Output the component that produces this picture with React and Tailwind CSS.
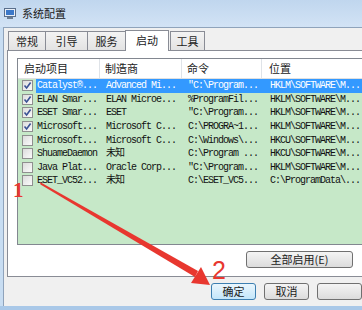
import React from 'react';

const rows = [
    { on: true, name: 'Catalyst®...', maker: 'Advanced Mi...', cmd: '"C:\\Program...', loc: 'HKLM\\SOFTWARE\\M...' },
    { on: true, name: 'ELAN Smar...', maker: 'ELAN Microe...', cmd: '%ProgramFil...', loc: 'HKLM\\SOFTWARE\\M...' },
    { on: true, name: 'ESET Smar...', maker: 'ESET', cmd: '"C:\\Program...', loc: 'HKLM\\SOFTWARE\\M...' },
    { on: true, name: 'Microsoft...', maker: 'Microsoft C...', cmd: 'C:\\PROGRA~1...', loc: 'HKLM\\SOFTWARE\\M...' },
    { on: false, name: 'Microsoft...', maker: 'Microsoft C...', cmd: 'C:\\Windows\\...', loc: 'HKCU\\SOFTWARE\\M...' },
    { on: false, name: 'ShuameDaemon', maker: '未知', cmd: 'C:\\Program ...', loc: 'HKCU\\SOFTWARE\\M...' },
    { on: false, name: 'Java Plat...', maker: 'Oracle Corp...', cmd: '"C:\\Program...', loc: 'HKLM\\SOFTWARE\\M...' },
    { on: false, name: 'ESET_VC52...', maker: '未知', cmd: 'C:\\ESET_VC5...', loc: 'C:\\ProgramData\\...' },
];

const tabs = ['常规', '引导', '服务', '启动', '工具'];

const cjk = "font-['Noto_Sans_CJK_SC',sans-serif]";
const mono = "font-['Liberation_Mono','Noto_Sans_CJK_SC',monospace] text-[10px] tracking-[-1px]";

const Check = ({ on }) => (
    <div className="w-[11px] h-[11px] border border-[#8f8f8f] bg-gradient-to-br from-[#dcdcdc] to-[#fbfbfb] flex items-center justify-center shrink-0">
        {on && (
            <svg width="9" height="9" viewBox="0 0 9 9">
                <path d="M1.5 4.5 L3.6 7 L7.6 1.5" fill="none" stroke="#3a5294" strokeWidth="1.6" />
            </svg>
        )}
    </div>
);

const Button = ({ children, focus, className }) => (
    <div
        className={`h-[17px] rounded-[3px] border flex items-center justify-center text-[11px] text-[#1b1b1b] ${cjk} ${
            focus ? 'border-[#3c7fb1] bg-gradient-to-b from-[#eaf6fd] to-[#c3e6fa]' : 'border-[#707070] bg-gradient-to-b from-[#f4f4f4] to-[#dcdcdc]'
        } ${className}`}
    >
        {children}
    </div>
);

export default function App() {
    return (
        <div className="relative w-[362px] h-[310px] overflow-hidden bg-[#c8ddf2] flex flex-col">
            {/* title bar */}
            <div className="h-[27px] shrink-0 flex items-center pl-[4px] gap-[6px] bg-gradient-to-b from-[#c0d6ee] to-[#d2e3f5]">
                <svg width="12" height="11" viewBox="0 0 12 11">
                    <rect x="0.5" y="0.5" width="11" height="8" fill="#e8eef6" stroke="#5a6f8c" />
                    <rect x="2" y="2" width="8" height="5" fill="#3c78c8" />
                    <rect x="3" y="9" width="6" height="2" fill="#6c7d92" />
                </svg>
                <span className={`text-[11px] text-[#1a1a1a] ${cjk}`}>系统配置</span>
            </div>

            {/* window body */}
            <div className="flex-1 ml-[3px] border-l border-t border-[#8fa3bb] bg-[#f0f0f0] flex flex-col">
                <div className="h-[22px] shrink-0 flex items-end pl-[4px]">
                    {tabs.map((t, i) => (
                        <div
                            key={t}
                            className={`border border-b-0 border-[#898c95] flex items-center justify-center text-[11px] text-[#1b1b1b] ${cjk} ${
                                i === 3
                                    ? 'h-[21px] w-[44px] bg-white -mb-px relative z-10 pb-[2px]'
                                    : 'h-[19px] bg-gradient-to-b from-[#f3f3f3] to-[#e3e3e3] -mr-px'
                            } ${i === 0 ? 'w-[38px]' : ''} ${i === 1 ? 'w-[43px]' : ''} ${i === 2 ? 'w-[39px]' : ''} ${i === 4 ? 'w-[35px] ml-[1px]' : ''}`}
                        >
                            {t}
                        </div>
                    ))}
                </div>

                {/* tab panel */}
                <div className="h-[227px] shrink-0 w-[420px] ml-[3px] border border-[#898c95] bg-white flex flex-col">
                    <div className="ml-[9px] mt-[7px] h-[187px] w-[400px] border border-[#828790] bg-[#c6e8c8] flex flex-col">
                        <div className={`h-[20px] shrink-0 bg-white border-b border-[#e0e0e0] flex text-[11px] text-[#1b1b1b] ${cjk}`}>
                            <div className="w-[82px] pl-[6px] border-r border-[#dfe3e8] flex items-center">启动项目</div>
                            <div className="w-[82px] pl-[5px] border-r border-[#dfe3e8] flex items-center">制造商</div>
                            <div className="w-[80px] pl-[5px] border-r border-[#dfe3e8] flex items-center">命令</div>
                            <div className="flex-1 pl-[7px] flex items-center">位置</div>
                        </div>
                        {rows.map((r, i) => (
                            <div key={i} className={`h-[13.6px] shrink-0 flex items-center text-[#111] ${mono}`}>
                                <div className="w-[18px] pl-[4px] flex items-center">
                                    <Check on={r.on} />
                                </div>
                                <div className={`flex-1 h-full flex items-center ${i === 0 ? 'bg-[#3399ff] text-white' : ''}`}>
                                    <div className="w-[70px] pl-[1px] whitespace-nowrap">{r.name}</div>
                                    <div className="w-[82px] whitespace-nowrap">{r.maker}</div>
                                    <div className="w-[82px] whitespace-nowrap">{r.cmd}</div>
                                    <div className="flex-1 whitespace-nowrap">{r.loc}</div>
                                </div>
                            </div>
                        ))}
                    </div>
                    <div className="flex mt-[6px] ml-[238px]">
                        <Button className="w-[107px]">全部启用(E)</Button>
                    </div>
                </div>

                {/* bottom buttons */}
                <div className="flex-1 flex items-start pt-[6px] pl-[207px] gap-[8px]">
                    <Button focus className="w-[62px]">确定</Button>
                    <Button className="w-[62px]">取消</Button>
                    <Button className="w-[62px]"> </Button>
                </div>
            </div>
            <div className="h-[4px] shrink-0 bg-[#a9c8e8]" />

            {/* red annotations */}
            <svg className="absolute left-0 top-0 pointer-events-none" width="362" height="310" viewBox="0 0 362 310">
                <polygon points="40,182 40.5,184.5 195,277 198,271" fill="#e8372f" />
                <polygon points="210,285 191,283 201,267" fill="#e8372f" />
            </svg>
            <span className="absolute left-[13px] top-[180px] text-[21px] leading-none font-bold text-[#e8372f] font-['Liberation_Serif',serif]">1</span>
            <span className="absolute left-[212px] top-[258px] text-[25px] leading-none text-[#e8372f] font-['Liberation_Sans',sans-serif]">2</span>
        </div>
    );
}
